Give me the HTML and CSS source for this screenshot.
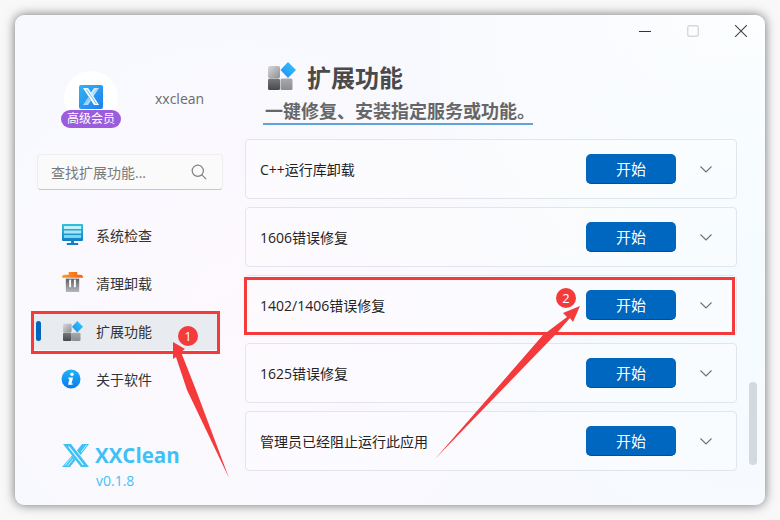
FILE: index.html
```html
<!DOCTYPE html>
<html lang="zh-CN">

<head>
    <meta charset="UTF-8">
    <title>XXClean</title>
    <link rel="stylesheet" href="styles.css">
</head>

<body>
    <div class="window">
        <aside class="sidebar">
            <div class="account">
                <div class="avatar">
                    <svg class="avatar-logo" width="24" height="24" viewBox="0 0 24 24">
                        <defs>
                            <linearGradient id="avatarBg" x1="0" y1="0" x2="1" y2="1">
                                <stop offset="0" stop-color="#30b4f4" />
                                <stop offset="1" stop-color="#1e7ff0" />
                            </linearGradient>
                        </defs>
                        <rect width="24" height="24" rx="2" fill="url(#avatarBg)" />
                        <path d="M4 3h5l11 17h-5z" fill="#fff" />
                        <path d="M7 4.500h1.200l9.800 14.500h-1.200z" fill="#6fc2f7" />
                        <path d="M20 3h-5l-3.500 5 2.500 3.800z" fill="#cfeafc" />
                        <path d="M4 20h5l2.800-4.200-2.500-3.600z" fill="#a9daf9" />
                        <path d="M14 9l4.500-5.500M6.500 18.500l3.500-4.500" stroke="#4fb4f5" stroke-width=".6" fill="none" />
                    </svg>
                    <span class="vip-badge">高级会员</span>
                </div>
                <span class="username">xxclean</span>
            </div>

            <div class="search">
                <span class="search-text">查找扩展功能...</span>
                <svg width="16" height="16" viewBox="0 0 16 16" fill="none" stroke="#808080" stroke-width="1.200">
                    <circle cx="6.800" cy="6.800" r="5.600" />
                    <path d="M10.800 10.800l4.400 4.400" />
                </svg>
            </div>

            <nav class="nav">
                <div class="nav-item">
                    <svg class="nav-icon" width="21" height="22" viewBox="0 0 22 22" preserveAspectRatio="none">
                        <defs>
                            <linearGradient id="monitorBg" x1="0" y1="0" x2="0" y2="1">
                                <stop offset="0" stop-color="#2cc3dc" />
                                <stop offset="1" stop-color="#0f7fc4" />
                            </linearGradient>
                        </defs>
                        <rect x="0" y="0" width="22" height="17" rx="1" fill="url(#monitorBg)" />
                        <rect x="2" y="2" width="18" height="3" fill="#c4f0fa" />
                        <rect x="2" y="6.500" width="18" height="3" fill="#a8e4f6" />
                        <rect x="2" y="11" width="18" height="3" fill="#7fd2f0" />
                        <rect x="9.500" y="17" width="3" height="3" fill="#0f7fc4" />
                        <rect x="5" y="19" width="12" height="2" fill="#0f7fc4" />
                    </svg>
                    <span>系统检查</span>
                </div>
                <div class="nav-item">
                    <svg class="nav-icon" width="21" height="20" viewBox="0 0 22 21" preserveAspectRatio="none">
                        <defs>
                            <linearGradient id="binBg" x1="0" y1="0" x2="0" y2="1">
                                <stop offset="0" stop-color="#5e6166" />
                                <stop offset="1" stop-color="#b4b7bc" />
                            </linearGradient>
                            <linearGradient id="lidBg" x1="0" y1="0" x2="1" y2="0">
                                <stop offset="0" stop-color="#fb9a2c" />
                                <stop offset="1" stop-color="#f4600c" />
                            </linearGradient>
                        </defs>
                        <path d="M0 6q0-3 3-3h4v-3h9v3h3q3 0 3 3z" fill="url(#lidBg)" />
                        <rect x="4" y="7" width="14" height="14" fill="url(#binBg)" />
                        <rect x="7.500" y="8" width="2" height="8" fill="#fff" />
                        <rect x="12.500" y="8" width="2" height="8" fill="#fff" />
                    </svg>
                    <span>清理卸载</span>
                </div>
                <div class="nav-item active">
                    <svg class="nav-icon nav-icon-ext" width="20" height="20" viewBox="0 0 28 28">
                        <use href="#extIcon" />
                    </svg>
                    <span>扩展功能</span>
                </div>
                <div class="nav-item">
                    <svg class="nav-icon nav-icon-info" width="20" height="20" viewBox="0 0 20 20">
                        <defs>
                            <linearGradient id="infoBg" x1="0" y1="0" x2="0" y2="1">
                                <stop offset="0" stop-color="#1fb4f8" />
                                <stop offset="1" stop-color="#0a78ee" />
                            </linearGradient>
                        </defs>
                        <circle cx="10" cy="10" r="9.500" fill="url(#infoBg)" />
                        <circle cx="11" cy="5.200" r="1.700" fill="#fff" />
                        <path d="M7.500 8.600h4.600l-1.600 6h1.300l-.3 1.200h-4.500l1.500-6h-1.300z" fill="#fff" />
                    </svg>
                    <span>关于软件</span>
                </div>
            </nav>

            <div class="brand">
                <div class="brand-row">
                    <svg width="28" height="23" viewBox="0 0 28 23" fill="#3fc1f6">
                        <path d="M1 0h8l18 23h-8z" />
                        <path d="M27 0h-7l-5 6.500 3.500 4.500z" />
                        <path d="M0 23h8l5.500-7-3.500-4.500z" />
                        <path d="M6 2.500h1.300l14.600 18.500h-1.300z" fill="#fff" />
                        <path d="M3 21.500l6.500-8M5.500 22l5.500-7M19 8l5.500-7" stroke="#fff" stroke-width=".7" fill="none" />
                    </svg>
                    <span class="brand-name">XXClean</span>
                </div>
                <span class="brand-version">v0.1.8</span>
            </div>
        </aside>

        <main class="main">
            <div class="titlebar">
                <svg width="12" height="12" viewBox="0 0 12 12" stroke="#333" fill="none">
                    <path d="M0 6.500h12" />
                </svg>
                <svg width="12" height="12" viewBox="0 0 12 12" stroke="#d8d8d8" stroke-width="1.400" fill="none">
                    <rect x=".7" y=".7" width="10.600" height="10.600" rx="2" />
                </svg>
                <svg width="12" height="12" viewBox="0 0 12 12" stroke="#444" stroke-width="1.100" fill="none">
                    <path d="M0 0l12 12M12 0L0 12" />
                </svg>
            </div>

            <header class="page-head">
                <div class="page-title">
                    <svg width="28" height="28" viewBox="0 0 28 28">
                        <defs>
                            <linearGradient id="tileTop" x1="0" y1="0" x2="1" y2="1">
                                <stop offset="0" stop-color="#d8d9db" />
                                <stop offset="1" stop-color="#8d8f92" />
                            </linearGradient>
                            <linearGradient id="tileBottom" x1="0" y1="0" x2="0" y2="1">
                                <stop offset="0" stop-color="#77797c" />
                                <stop offset="1" stop-color="#46484b" />
                            </linearGradient>
                            <linearGradient id="tileRight" x1="0" y1="0" x2="0" y2="1">
                                <stop offset="0" stop-color="#a8aaad" />
                                <stop offset="1" stop-color="#8a8c8f" />
                            </linearGradient>
                            <linearGradient id="tileDiamond" x1="1" y1="0" x2="0" y2="1">
                                <stop offset="0" stop-color="#35c8fc" />
                                <stop offset="1" stop-color="#1f8cf0" />
                            </linearGradient>
                            <g id="extIcon">
                                <rect x="0" y="4" width="12" height="12" rx="1.500" fill="url(#tileTop)" />
                                <rect x="0" y="16.500" width="12" height="11.500" rx="1.500" fill="url(#tileBottom)" />
                                <rect x="12.500" y="16.500" width="12" height="11.500" rx="1.500" fill="url(#tileRight)" />
                                <path d="M20 0l8 8-8 8-7.500-8z" fill="url(#tileDiamond)" />
                            </g>
                        </defs>
                        <use href="#extIcon" />
                    </svg>
                    <h1>扩展功能</h1>
                </div>
                <p class="page-sub">一键修复、安装指定服务或功能。</p>
            </header>

            <div class="list">
                <div class="card">
                    <span class="card-name">C++运行库卸载</span>
                    <button class="start-btn">开始</button>
                    <svg class="chevron" width="12" height="7" viewBox="0 0 12 7" fill="none" stroke="#6e6e6e" stroke-width="1.100">
                        <path d="M.5 .5L6 6l5.500-5.500" />
                    </svg>
                </div>
                <div class="card">
                    <span class="card-name">1606错误修复</span>
                    <button class="start-btn">开始</button>
                    <svg class="chevron" width="12" height="7" viewBox="0 0 12 7" fill="none" stroke="#6e6e6e" stroke-width="1.100">
                        <path d="M.5 .5L6 6l5.500-5.500" />
                    </svg>
                </div>
                <div class="card">
                    <span class="card-name">1402/1406错误修复</span>
                    <button class="start-btn">开始</button>
                    <svg class="chevron" width="12" height="7" viewBox="0 0 12 7" fill="none" stroke="#6e6e6e" stroke-width="1.100">
                        <path d="M.5 .5L6 6l5.500-5.500" />
                    </svg>
                </div>
                <div class="card">
                    <span class="card-name">1625错误修复</span>
                    <button class="start-btn">开始</button>
                    <svg class="chevron" width="12" height="7" viewBox="0 0 12 7" fill="none" stroke="#6e6e6e" stroke-width="1.100">
                        <path d="M.5 .5L6 6l5.500-5.500" />
                    </svg>
                </div>
                <div class="card">
                    <span class="card-name">管理员已经阻止运行此应用</span>
                    <button class="start-btn">开始</button>
                    <svg class="chevron" width="12" height="7" viewBox="0 0 12 7" fill="none" stroke="#6e6e6e" stroke-width="1.100">
                        <path d="M.5 .5L6 6l5.500-5.500" />
                    </svg>
                </div>
            </div>
            <div class="scroll-thumb"></div>
        </main>
    </div>

    <!-- 截图上的红色标注 -->
    <svg class="marks" width="780" height="520" viewBox="0 0 780 520">
        <rect x="32.500" y="312.500" width="186" height="40" fill="none" stroke="#f43a3a" stroke-width="3" />
        <rect x="245.500" y="278.500" width="488" height="55" fill="none" stroke="#f43a3a" stroke-width="3" />
        <path d="M173 342L185 349 181 352 196 390 229 478 187 390 176 357 173 359z" fill="#f43a3a" />
        <path d="M580 306L573 322 570 318 555 335 435 459 543 335 567 317 563 313z" fill="#f43a3a" />
    </svg>
    <span class="mark-num mark-one">1</span>
    <span class="mark-num mark-two">2</span>
</body>

</html>
```

FILE: styles.css
```css
body {
    margin: 0;
    padding: 15px;
    width: 750px;
    height: 490px;
    background-color: #f8f8f8;
    font-family: "Open Sans", "Noto Sans CJK SC", sans-serif;
    color: #222;
    overflow: hidden;
}

.window {
    display: flex;
    position: relative;
    width: 750px;
    height: 490px;
    border-radius: 9px;
    box-shadow: 0 0 11px rgba(0, 0, 0, 0.55);
    background:
        radial-gradient(circle at 100% 55%, #f4fcff 0, rgba(244, 252, 255, 0) 35%),
        radial-gradient(circle at 100% 0, #fdfeff 0, rgba(253, 254, 255, 0) 40%),
        radial-gradient(circle at 30% 60%, #fdf8fe 0, rgba(253, 248, 254, 0) 55%),
        #f7f9fe;
}

/* 左侧栏 */
.sidebar {
    width: 230px;
    flex-shrink: 0;
    display: flex;
    flex-direction: column;
    padding: 0 25px 0 18px;
    box-sizing: border-box;
}

.account {
    display: flex;
    align-items: center;
    margin-top: 56px;
    padding-left: 31px;
    height: 58px;
}

.avatar {
    position: relative;
    display: flex;
    justify-content: center;
    flex-shrink: 0;
    width: 54px;
    height: 54px;
    padding-top: 14px;
    box-sizing: border-box;
    border-radius: 50%;
    background-color: #fff;
    align-self: flex-start;
}

.vip-badge {
    position: absolute;
    left: -3px;
    top: 39px;
    width: 60px;
    height: 18px;
    line-height: 18px;
    border-radius: 9px;
    background-color: #9b5ddd;
    color: #fff;
    font-size: 12px;
    text-align: center;
}

.username {
    margin: 0 0 4px 37px;
    font-size: 14px;
    color: #6b6b6b;
}

.search {
    display: flex;
    align-items: center;
    justify-content: space-between;
    flex-shrink: 0;
    width: 186px;
    height: 36px;
    margin: 25px 0 0 4px;
    padding: 0 15px 0 13px;
    box-sizing: border-box;
    border: 1px solid #eeeeee;
    border-bottom: 1px solid #c6c6c6;
    border-radius: 4px;
    background-color: #fafafa;
}

.search-text {
    font-size: 14px;
    color: #7a7a7a;
}

.nav {
    display: flex;
    flex-direction: column;
    margin-top: 21px;
}

.nav-item {
    position: relative;
    display: flex;
    align-items: center;
    height: 48px;
    padding-left: 63px;
    font-size: 14px;
    color: #333;
}

.nav-icon {
    position: absolute;
    left: 29px;
    top: 13px;
}

.nav-icon-ext {
    left: 30px;
    top: 14px;
}

.nav-icon-info {
    left: 28px;
    top: 14px;
}

.active::before {
    content: "";
    position: absolute;
    left: 0;
    right: 0;
    top: 5px;
    bottom: 5px;
    margin-right: 2px;
    border-radius: 4px;
    background-color: #e8ebef;
}

.active::after {
    content: "";
    position: absolute;
    left: 3px;
    top: 14px;
    width: 5px;
    height: 20px;
    border-radius: 3px;
    background-color: #0067c0;
}

.active span,
.active svg {
    z-index: 1;
}

.active span {
    position: relative;
}

.brand {
    display: flex;
    flex-direction: column;
    margin-top: auto;
    padding: 0 0 14px 29px;
}

.brand-row {
    display: flex;
    align-items: center;
    gap: 5px;
}

.brand-name {
    font-size: 20.500px;
    font-weight: 700;
    line-height: 28px;
    color: #3fc1f6;
}

.brand-version {
    margin: 2px 0 0 34px;
    font-size: 14px;
    line-height: 20px;
    color: #45c1f6;
}

/* 右侧内容 */
.main {
    position: relative;
    flex: 1;
    min-width: 0;
    display: flex;
    flex-direction: column;
}

.titlebar {
    display: flex;
    justify-content: flex-end;
    gap: 36px;
    padding: 10px 18px 0 0;
    height: 12px;
}

.page-head {
    margin-top: 25px;
    padding-left: 18px;
}

.page-title {
    display: flex;
    align-items: center;
    gap: 11px;
    padding-left: 5px;
    height: 28px;
}

h1 {
    margin: 0;
    font-size: 24px;
    font-weight: 700;
    color: #4a4a4a;
}

.page-sub {
    display: block;
    width: 270px;
    margin: 9px 0 0;
    padding: 0 0 0 2px;
    box-sizing: border-box;
    border-bottom: 2px solid #60a3d9;
    font-size: 18px;
    font-weight: 700;
    line-height: 24px;
    color: #666;
    white-space: nowrap;
}

.list {
    display: flex;
    flex-direction: column;
    gap: 8px;
    margin: 14px 0 0;
    width: 492px;
}

.card {
    display: flex;
    align-items: center;
    height: 60px;
    padding: 0 24px 0 14px;
    box-sizing: border-box;
    border: 1px solid #e2e6ec;
    border-radius: 4px;
    background-color: rgba(255, 255, 255, 0.35);
}

.card-name {
    flex: 1;
    font-size: 14px;
    color: #222;
}

.start-btn {
    width: 90px;
    height: 30px;
    margin-right: 24px;
    padding: 0;
    border: none;
    border-bottom: 1px solid #00518f;
    border-radius: 5px;
    background-color: #0067c0;
    color: #fff;
    font-family: "Open Sans", "Noto Sans CJK SC", sans-serif;
    font-size: 15px;
}

.scroll-thumb {
    position: absolute;
    right: 8px;
    top: 367px;
    width: 8px;
    height: 83px;
    border-radius: 4px;
    background-color: #d3dadd;
}

/* 标注层 */
.marks {
    position: absolute;
    left: 0;
    top: 0;
}

.mark-num {
    position: absolute;
    width: 20px;
    height: 20px;
    line-height: 20px;
    border-radius: 50%;
    background-color: #f43a3a;
    color: #fff;
    font-size: 13px;
    text-align: center;
}

.mark-one {
    left: 178px;
    top: 326px;
}

.mark-two {
    left: 556px;
    top: 288px;
}
```
